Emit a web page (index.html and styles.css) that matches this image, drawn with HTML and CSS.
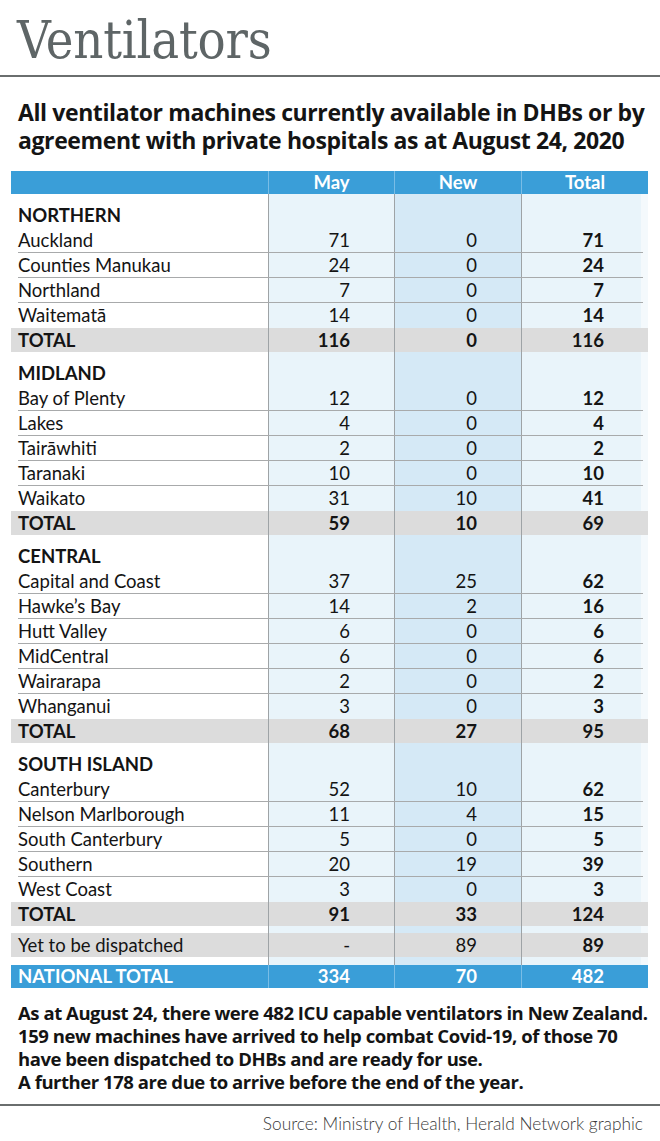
FILE: index.html
```html
<!DOCTYPE html>
<html>
<head>
<meta charset="utf-8">
<link rel="stylesheet" href="styles.css">
</head>
<body>
<div class="page">
  <header class="title-bar">
    <h1 class="title">Ventilators</h1>
  </header>
  <h2 class="subtitle">All ventilator machines currently available in DHBs or by<br>agreement with private hospitals as at August 24, 2020</h2>

  <div class="table">
    <div class="row head"><div class="c lab"></div><div class="c">May</div><div class="c">New</div><div class="c">Total</div></div>

    <div class="section">
      <div class="row sec"><div class="c lab">NORTHERN</div><div class="c"></div><div class="c"></div><div class="c"></div></div>
      <div class="row line"><div class="c lab">Auckland</div><div class="c n">71</div><div class="c n">0</div><div class="c n b">71</div></div>
      <div class="row line"><div class="c lab">Counties Manukau</div><div class="c n">24</div><div class="c n">0</div><div class="c n b">24</div></div>
      <div class="row line"><div class="c lab">Northland</div><div class="c n">7</div><div class="c n">0</div><div class="c n b">7</div></div>
      <div class="row"><div class="c lab">Waitematā</div><div class="c n">14</div><div class="c n">0</div><div class="c n b">14</div></div>
      <div class="row tot"><div class="c lab">TOTAL</div><div class="c n">116</div><div class="c n">0</div><div class="c n">116</div></div>
    </div>

    <div class="section">
      <div class="row sec"><div class="c lab">MIDLAND</div><div class="c"></div><div class="c"></div><div class="c"></div></div>
      <div class="row line"><div class="c lab">Bay of Plenty</div><div class="c n">12</div><div class="c n">0</div><div class="c n b">12</div></div>
      <div class="row line"><div class="c lab">Lakes</div><div class="c n">4</div><div class="c n">0</div><div class="c n b">4</div></div>
      <div class="row line"><div class="c lab">Tairāwhiti</div><div class="c n">2</div><div class="c n">0</div><div class="c n b">2</div></div>
      <div class="row line"><div class="c lab">Taranaki</div><div class="c n">10</div><div class="c n">0</div><div class="c n b">10</div></div>
      <div class="row"><div class="c lab">Waikato</div><div class="c n">31</div><div class="c n">10</div><div class="c n b">41</div></div>
      <div class="row tot"><div class="c lab">TOTAL</div><div class="c n">59</div><div class="c n">10</div><div class="c n">69</div></div>
    </div>

    <div class="section">
      <div class="row sec"><div class="c lab">CENTRAL</div><div class="c"></div><div class="c"></div><div class="c"></div></div>
      <div class="row line"><div class="c lab">Capital and Coast</div><div class="c n">37</div><div class="c n">25</div><div class="c n b">62</div></div>
      <div class="row line"><div class="c lab">Hawke’s Bay</div><div class="c n">14</div><div class="c n">2</div><div class="c n b">16</div></div>
      <div class="row line"><div class="c lab">Hutt Valley</div><div class="c n">6</div><div class="c n">0</div><div class="c n b">6</div></div>
      <div class="row line"><div class="c lab">MidCentral</div><div class="c n">6</div><div class="c n">0</div><div class="c n b">6</div></div>
      <div class="row line"><div class="c lab">Wairarapa</div><div class="c n">2</div><div class="c n">0</div><div class="c n b">2</div></div>
      <div class="row"><div class="c lab">Whanganui</div><div class="c n">3</div><div class="c n">0</div><div class="c n b">3</div></div>
      <div class="row tot"><div class="c lab">TOTAL</div><div class="c n">68</div><div class="c n">27</div><div class="c n">95</div></div>
    </div>

    <div class="section">
      <div class="row sec"><div class="c lab">SOUTH ISLAND</div><div class="c"></div><div class="c"></div><div class="c"></div></div>
      <div class="row line"><div class="c lab">Canterbury</div><div class="c n">52</div><div class="c n">10</div><div class="c n b">62</div></div>
      <div class="row line"><div class="c lab">Nelson Marlborough</div><div class="c n">11</div><div class="c n">4</div><div class="c n b">15</div></div>
      <div class="row line"><div class="c lab">South Canterbury</div><div class="c n">5</div><div class="c n">0</div><div class="c n b">5</div></div>
      <div class="row line"><div class="c lab">Southern</div><div class="c n">20</div><div class="c n">19</div><div class="c n b">39</div></div>
      <div class="row"><div class="c lab">West Coast</div><div class="c n">3</div><div class="c n">0</div><div class="c n b">3</div></div>
      <div class="row tot"><div class="c lab">TOTAL</div><div class="c n">91</div><div class="c n">33</div><div class="c n">124</div></div>
    </div>

    <div class="row yet"><div class="c lab">Yet to be dispatched</div><div class="c n">-</div><div class="c n">89</div><div class="c n b">89</div></div>
    <div class="row nat"><div class="c lab">NATIONAL TOTAL</div><div class="c n">334</div><div class="c n">70</div><div class="c n">482</div></div>
  </div>

  <p class="note">As at August 24, there were 482 ICU capable ventilators in New Zealand.<br>159 new machines have arrived to help combat Covid-19, of those 70<br>have been dispatched to DHBs and are ready for use.<br>A further 178 are due to arrive before the end of the year.</p>

  <footer class="source">Source: Ministry of Health, Herald Network graphic</footer>
</div>
</body>
</html>
```
FILE: styles.css
```css
* { box-sizing: border-box; }
html, body { margin: 0; padding: 0; background: #fff; }
body { font-family: Lato, "Open Sans", sans-serif; color: #141414; }
.page { width: 660px; overflow: hidden; }

.title-bar {
  height: 77px;
  border-bottom: 2px solid #6a6e6e;
  padding: 12px 0 0 17px;
}
.title {
  margin: 0;
  font-family: "DejaVu Serif Condensed", "DejaVu Serif", serif;
  font-stretch: condensed;
  font-weight: 400;
  font-size: 52px;
  line-height: 56px;
  color: #5e6566;
  letter-spacing: -0.2px;
}

.subtitle {
  margin: 21px 0 0 18px;
  font-family: "Open Sans", sans-serif;
  font-weight: 700;
  font-size: 23px;
  line-height: 28px;
  color: #141414;
  white-space: nowrap;
  letter-spacing: -0.4px;
}

.table {
  margin: 17px 12px 0 11px;
  width: 637px;
  background: linear-gradient(to right,
    #ffffff 0 257px,
    #9ea3a6 257px 258px,
    #e9f4fa 258px 383px,
    #9ea3a6 383px 384px,
    #d5e9f6 384px 510px,
    #9ea3a6 510px 511px,
    #e9f4fa 511px 630px,
    #f4f9fc 630px 637px);
}

.row {
  display: grid;
  grid-template-columns: 257px 126px 127px 127px;
  height: 25px;
  align-items: center;
  font-size: 18.5px;
}
.c { padding: 0; line-height: 25px; height: 100%; white-space: nowrap; }
.c.lab { padding-left: 7px; }
.c.n { text-align: right; padding-right: 44px; }
.c.b { font-weight: 700; }

.row.line {
  background: linear-gradient(#a8aaab, #a8aaab) no-repeat 7px 100% / 625px 1px;
}

.row.head {
  height: 23px;
  background: #3a9ed8;
  color: #fff;
  font-weight: 700;
}
.row.head .c { line-height: 23px; text-align: center; }
.row.head .c + .c { border-left: 1px solid #79bde6; }

.section { padding-top: 9px; }
.row.sec { font-weight: 700; }

.row.tot, .row.yet {
  height: 24px;
  background: #dcdcdc;
}
.row.tot { font-weight: 700; }
.row.tot .c, .row.yet .c { line-height: 24px; }
.row.tot .c + .c, .row.yet .c + .c { border-left: 1px solid #9ea3a6; }

.row.yet { margin-top: 7px; }

.row.nat {
  margin-top: 8px;
  height: 23px;
  background: #3a9ed8;
  color: #fff;
  font-weight: 700;
}
.row.nat .c { line-height: 23px; }
.row.nat .c + .c { border-left: 1px solid #79bde6; }

.note {
  margin: 13px 0 0 18px;
  font-family: "Open Sans", sans-serif;
  font-weight: 700;
  font-size: 18.5px;
  line-height: 23px;
  color: #141414;
  white-space: nowrap;
  letter-spacing: -0.45px;
}

.source {
  margin-top: 11px;
  border-top: 2px solid #6a6e6e;
  padding: 7px 17px 0 0;
  text-align: right;
  font-family: Lato, sans-serif;
  font-weight: 300;
  font-size: 17.3px;
  line-height: 22px;
  color: #3a3a3a;
}
```
